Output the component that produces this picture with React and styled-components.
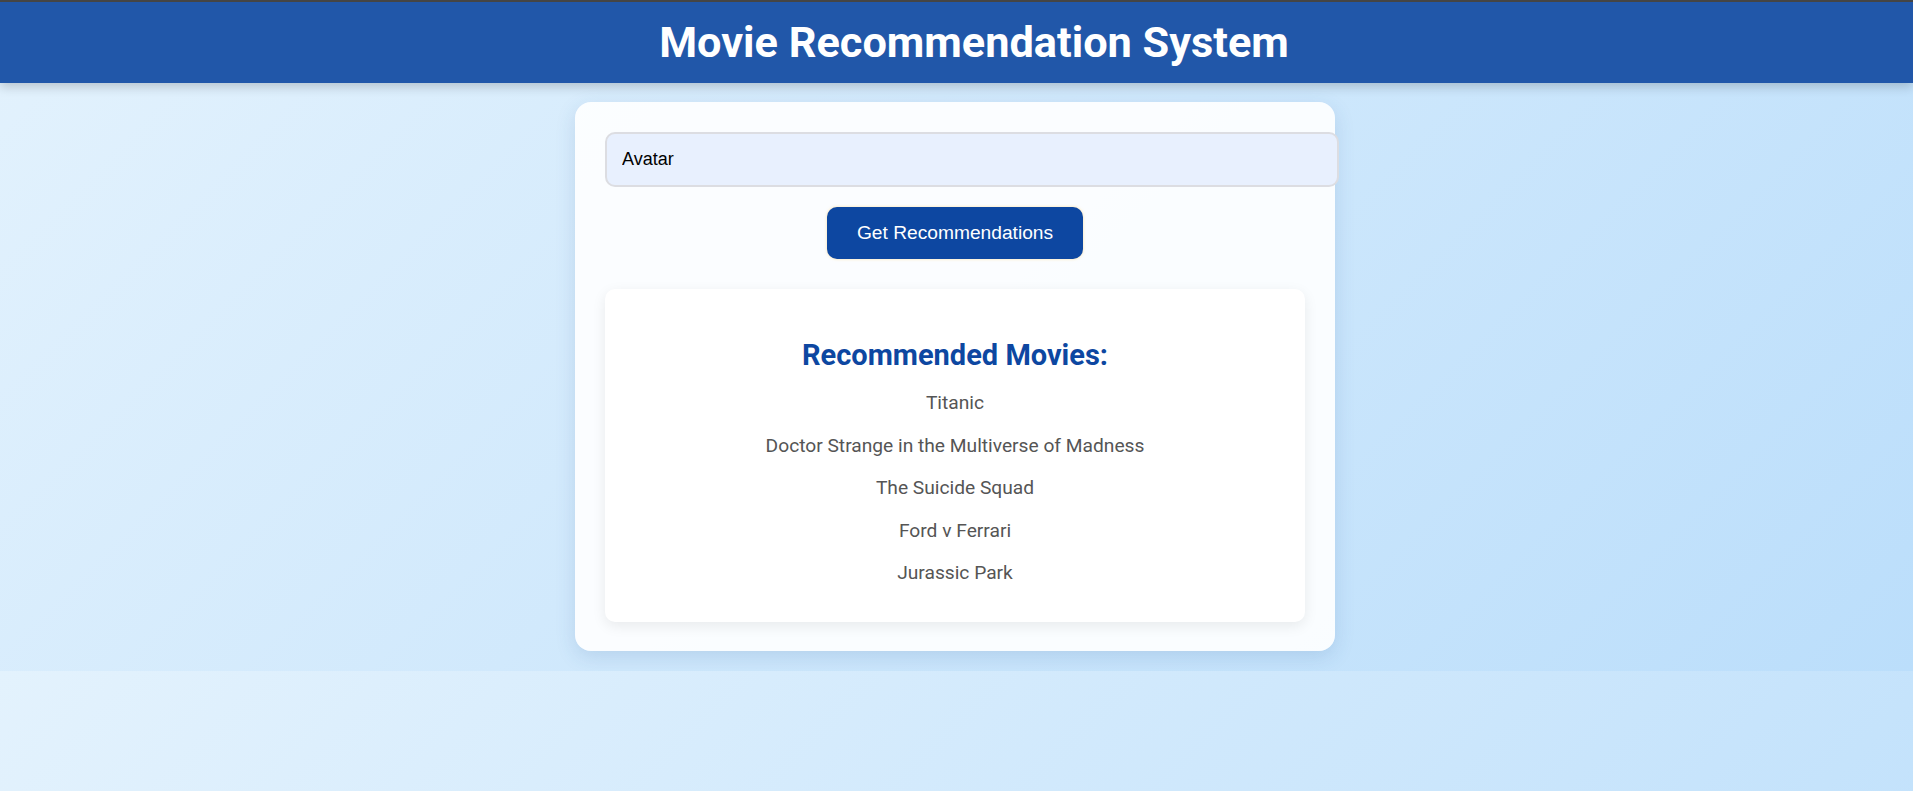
import React, { useState } from 'react'
import styled, { createGlobalStyle } from 'styled-components'

const movies = [
    'Titanic',
    'Doctor Strange in the Multiverse of Madness',
    'The Suicide Squad',
    'Ford v Ferrari',
    'Jurassic Park',
]

function App() {
    const [query, setQuery] = useState('Avatar')

    return (
        <>
            <GlobalStyle />
            <Page>
                <Header>
                    <Title>Movie Recommendation System</Title>
                </Header>
                <Card>
                    <SearchInput
                        type="text"
                        value={query}
                        onChange={(e) => setQuery(e.target.value)}
                        placeholder="Enter a movie name"
                    />
                    <ButtonRow>
                        <Button>Get Recommendations</Button>
                    </ButtonRow>
                    <Results>
                        <ResultsHeading>Recommended Movies:</ResultsHeading>
                        <MovieList>
                            {movies.map((m) => (
                                <MovieItem key={m}>{m}</MovieItem>
                            ))}
                        </MovieList>
                    </Results>
                </Card>
            </Page>
        </>
    )
}

export default App

const GlobalStyle = createGlobalStyle`
    html, body {
        margin:0;
        padding:0;
    }
    body {
        font-family:Roboto, "Noto Sans", sans-serif;
        background:linear-gradient(135deg, #e3f2fd, #bbdefb);
        border-top:2px solid #454545;
    }
`

const Page = styled.div`
    display:flex;
    flex-direction:column;
    align-items:center;
    padding-bottom:20px;
`

const Header = styled.header`
    align-self:stretch;
    background:#2157a9;
    box-shadow:0 4px 10px rgba(0,0,0,0.18);
    padding:15px 0 14px 35px;
    text-align:center;
`

const Title = styled.h1`
    margin:0;
    color:#fff;
    font-family:Roboto, sans-serif;
    font-weight:700;
    font-size:43.3px;
    line-height:52px;
`

const Card = styled.div`
    box-sizing:border-box;
    width:760px;
    margin:19px 3px 0 0;
    padding:30px 30px 29px;
    border-radius:16px;
    background:rgba(255,255,255,0.9);
    box-shadow:0 6px 20px rgba(40,90,150,0.15);
`

const SearchInput = styled.input`
    display:block;
    width:100%;
    padding:15px;
    font-family:"Liberation Sans", Arial, sans-serif;
    font-size:18px;
    line-height:21px;
    color:#000;
    background:#e8f0fe;
    border:2px solid #dcdde2;
    border-radius:10px;
    outline:none;
`

const ButtonRow = styled.div`
    display:flex;
    justify-content:center;
    margin-top:20px;
`

const Button = styled.button`
    padding:15px 30px;
    font-family:"Liberation Sans", Arial, sans-serif;
    font-size:19.2px;
    line-height:22px;
    color:#fff;
    background:#0d47a1;
    border:none;
    border-radius:10px;
    box-shadow:0 0 3px rgba(255,200,90,0.55);
    cursor:pointer;
`

const Results = styled.div`
    margin-top:30px;
    padding:49px 20px 27px;
    background:#fff;
    border-radius:10px;
    box-shadow:0 4px 14px rgba(0,0,0,0.08);
    text-align:center;
`

const ResultsHeading = styled.h2`
    margin:0 0 10px;
    color:#0d47a1;
    font-family:Roboto, sans-serif;
    font-weight:700;
    font-size:29px;
    line-height:34px;
`

const MovieList = styled.ul`
    list-style:none;
    margin:0;
    padding:0;
`

const MovieItem = styled.li`
    padding:10px 0;
    font-family:Roboto, sans-serif;
    font-size:19.2px;
    line-height:22.5px;
    color:#555;
`
